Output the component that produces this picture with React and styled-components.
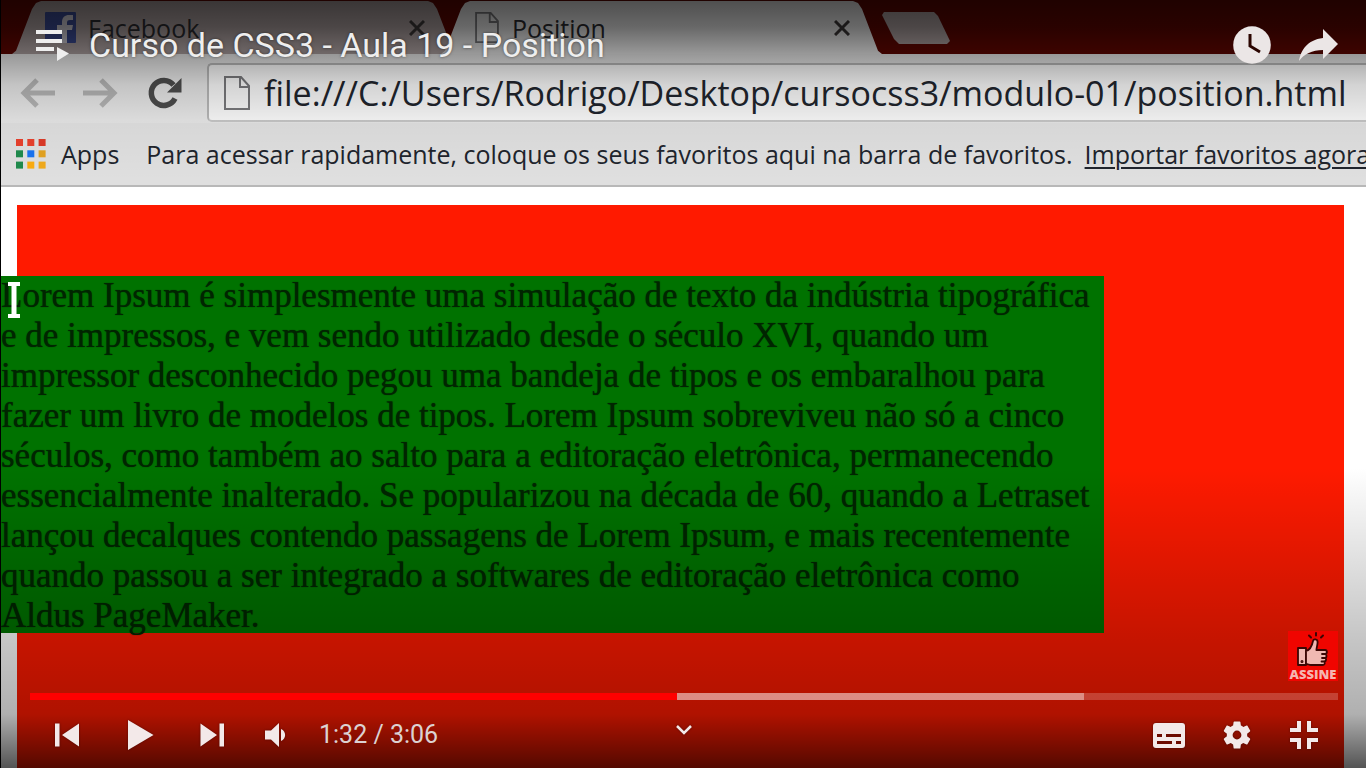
import React from "react";
import styled, { createGlobalStyle } from "styled-components";

const GlobalStyle = createGlobalStyle`
  *, *::before, *::after { box-sizing: border-box; }
  body { margin: 0; background: #000; overflow: hidden; }
  button, input { font: inherit; color: inherit; margin: 0; padding: 0; border: 0; background: none; }
  button { cursor: pointer; }
  svg { display: block; flex: none; }
  p { margin: 0; }
`;

const Player = styled.main`
  position: relative;
  display: flex;
  min-height: 100vh;
  overflow: hidden;
  background: #000;
`;

/* ---------- video frame: a browser window ---------- */

const Frame = styled.section`
  display: flex;
  flex-direction: column;
  flex: 1;
  min-width: 0;
  margin-left: 1px;
  background: #fff;
  font-family: "Open Sans", "Noto Sans", sans-serif;
  color: #20242c;
`;

const TabStrip = styled.div`
  display: flex;
  height: 54px;
  padding: 1px 0 0 11px;
  background: #5c0500;
`;

const Tab = styled.div`
  display: flex;
  align-items: center;
  width: ${(p) => p.$width}px;
  height: 53px;
  margin-right: ${(p) => (p.$active ? 0 : -16)}px;
  padding: 0 32px 0 33px;
  gap: 12px;
  background: ${(p) => (p.$active ? "#e6e6e6" : "#a89c9c")};
  color: #2a2a2e;
  font-size: 25px;
  clip-path: polygon(0 100%, 4px 94%, 20px 8px, 24px 2px, 29px 0, calc(100% - 29px) 0, calc(100% - 24px) 2px, calc(100% - 20px) 8px, calc(100% - 4px) 94%, 100% 100%);
`;

const TabTitle = styled.span`
  flex: 1;
  line-height: 32px;
`;

const NewTab = styled.button`
  width: 68px;
  height: 32px;
  margin-top: 11px;
  background: #a89c9c;
  clip-path: polygon(0 3px, 2px 0, 52px 0, 56px 4px, 68px 29px, 65px 100%, 17px 100%, 12px 27px);
`;

const Toolbar = styled.div`
  display: flex;
  align-items: flex-end;
  height: 69px;
  padding: 0 0 1px 19px;
  background: #e4e4e4;
`;

const NavButtons = styled.div`
  display: flex;
  align-items: center;
  gap: 28px;
  height: 58px;
  width: 187px;
`;

const PlainButton = styled.button`
  display: flex;
  align-items: center;
`;

const AddressBar = styled.label`
  display: flex;
  align-items: center;
  flex: 1;
  gap: 14px;
  height: 59px;
  padding-left: 15px;
  border: 2px solid #b4b4b4;
  border-right: 0;
  border-bottom-color: #c4c4c4;
  border-radius: 5px 0 0 5px;
  background: #f6f6f6;
`;

const AddressInput = styled.input`
  flex: 1;
  min-width: 0;
  height: 48px;
  font-size: 34px;
  outline: 0;
`;

const Bookmarks = styled.div`
  display: flex;
  align-items: center;
  height: 64px;
  padding-left: 15px;
  border-bottom: 2px solid #b8b8b8;
  background: #dfdfdf;
  font-size: 25px;
  white-space: nowrap;
`;

const AppsButton = styled.button`
  display: flex;
  align-items: center;
  gap: 15px;
  margin-right: 27px;
`;

const BookmarkLink = styled.a`
  margin-left: 12px;
  color: inherit;
  text-underline-offset: 3px;
  text-decoration-thickness: 2px;
`;

const Document = styled.div`
  display: flex;
  flex: 1;
  padding: 18px 22px 0 16px;
  background: #fff;
`;

const RedBox = styled.div`
  flex: 1;
  min-width: 0;
  padding-top: 71px;
  background: #ff1a00;
`;

const GreenBox = styled.div`
  display: flow-root;
  position: relative;
  width: 83.1%;
  margin-left: -16px;
  background: #007200;
`;

const Lorem = styled.p`
  margin-bottom: -3px;
  color: #002500;
  font-family: "Liberation Serif", "Times New Roman", serif;
  font-size: 35px;
  line-height: 40px;
  text-shadow: 0 0 1px #002500;
`;

const Line = styled.span`
  display: block;
  white-space: nowrap;
`;

const IBeam = styled.svg`
  position: absolute;
  top: 4px;
  left: 6px;
`;

/* ---------- player chrome ---------- */

const Overlay = styled.div`
  position: absolute;
  inset: 0;
  display: flex;
  flex-direction: column;
  justify-content: space-between;
  color: #f3e9e9;
  font-family: Roboto, sans-serif;
  background:
    linear-gradient(to bottom, rgba(0,0,0,.66) 0, rgba(0,0,0,.55) 27px, rgba(0,0,0,.32) 56px, rgba(0,0,0,.14) 85px, rgba(0,0,0,.04) 120px, transparent 180px),
    linear-gradient(to top, rgba(0,0,0,.67) 0, rgba(0,0,0,.31) 54px, rgba(0,0,0,.22) 134px, transparent 300px);
`;

const TopBar = styled.header`
  display: flex;
  align-items: center;
  height: 90px;
  padding: 0 28px 0 36px;
  gap: 20px;
  color: #eee;
`;

const Title = styled.h1`
  flex: 1;
  margin: 0;
  font-size: 34px;
  font-weight: 400;
  line-height: 40px;
  text-shadow: 0 0 3px rgba(0, 0, 0, 0.5);
`;

const TopActions = styled.div`
  display: flex;
  align-items: center;
  gap: 28px;
`;

const Bottom = styled.footer`
  display: flex;
  flex-direction: column;
  padding: 0 28px 0 30px;
`;

const Watermark = styled.button`
  display: flex;
  flex-direction: column;
  align-items: center;
  align-self: flex-end;
  width: 50px;
  height: 50px;
  margin-bottom: 12px;
  background: #f00500;
  color: #f5b5b0;
  font-family: "Open Sans", sans-serif;
  font-size: 13px;
  font-weight: 800;
  line-height: 14px;
`;

const Progress = styled.input.attrs({ type: "range" })`
  appearance: none;
  display: block;
  width: 100%;
  height: 7px;
  background: linear-gradient(
    to right,
    #ff0000 var(--played),
    rgba(255, 255, 255, 0.52) var(--played) var(--loaded),
    rgba(255, 255, 255, 0.2) var(--loaded)
  );
  &::-webkit-slider-thumb { appearance: none; width: 0; height: 7px; }
`;

const Controls = styled.div`
  display: grid;
  grid-template-columns: 1fr auto 1fr;
  align-items: center;
  height: 68px;
  padding-top: 2px;
`;

const Group = styled.div`
  display: flex;
  align-items: center;
  justify-content: ${(p) => (p.$end ? "flex-end" : "flex-start")};
`;

const ControlButton = styled.button`
  display: flex;
  align-items: center;
  justify-content: center;
  width: ${(p) => p.$width}px;
  height: 64px;
  filter: drop-shadow(0 0 1px rgba(0, 0, 0, 0.4));
`;

const MoreButton = styled(ControlButton)`
  padding-bottom: 10px;
`;

const Time = styled.span`
  margin-left: 13px;
  color: #dcd2d2;
  font-size: 25px;
  line-height: 32px;
`;

const PageIcon = ({ width, height }) => (
  <svg width={width} height={height} viewBox="0 0 26 34" fill="none" stroke="#77777a" strokeWidth="2">
    <path d="M1 1h16l8 9v23H1zM16 1v10h9" />
  </svg>
);

const CloseIcon = () => (
  <svg width="16" height="16" viewBox="0 0 16 16" stroke="#3c3838" strokeWidth="3">
    <path d="M1 1l14 14M15 1L1 15" />
  </svg>
);

const FacebookIcon = () => (
  <svg width="31" height="31" viewBox="0 0 31 31">
    <rect width="31" height="31" rx="1" fill="#39488f" />
    <path d="M17 31V18h-5v-5h5V10c0-4.600 3-7 7-7h4v5h-3c-2 0-3 .8-3 2.600V13h6l-1 5h-5v13z" fill="#c9c6cf" />
  </svg>
);

const ArrowIcon = ({ forward }) => (
  <svg width="35" height="30" viewBox="0 0 35 30" fill="none" stroke="#b2b2b2" strokeWidth="5">
    <path d={forward ? "M0 15h30M18 2l13 13-13 13" : "M35 15H5M17 2L4 15l13 13"} />
  </svg>
);

const ReloadIcon = () => (
  <svg width="38" height="34" viewBox="0 0 36 34">
    <path d="M28 22.500a12.500 12.500 0 1 1-1.500-13.500" fill="none" stroke="#4b4b4b" strokeWidth="5.500" />
    <path d="M34.500 2v14.500H20z" fill="#4b4b4b" />
  </svg>
);

const appColors = ["#e8402c", "#e8402c", "#dc3a28", "#1f8a4c", "#1a73f0", "#e3a322", "#1f8a4c", "#fbac10", "#f0aa1c"];
const AppsIcon = () => (
  <svg width="30" height="30" viewBox="0 0 30 30">
    {appColors.map((c, i) => (
      <rect key={i} x={(i % 3) * 11.300} y={Math.floor(i / 3) * 11.300} width="7" height="7" fill={c} />
    ))}
  </svg>
);

const ThumbIcon = () => (
  <svg width="34" height="36" viewBox="0 0 34 36" fill="#f0b8b2" stroke="#3a0604" strokeWidth="1.800" strokeLinejoin="round" strokeLinecap="round">
    <path d="M2 17h8v17H2z" />
    <path d="M10 20c4-1 6-5 7-10 .5-2.500 4.600-2 4.600 1 0 3-1 5-1.200 8H29c2.500 0 2.500 4 0 4 2 0 2 4 0 4 1.500 0 1.500 3.500-.5 3.500 1 1.500 0 3.500-2 3.500H15c-2 0-3-1-5-1z" />
    <path d="M26 23h3M26 27h3M25.500 30.500h3" />
    <path d="M20 2v2.500M13 4.500l2 2M27 4.500l-2 2" strokeWidth="2" />
    <circle cx="6" cy="30.500" r=".6" />
  </svg>
);

const lines = [
  "Lorem Ipsum é simplesmente uma simulação de texto da indústria tipográfica",
  "e de impressos, e vem sendo utilizado desde o século XVI, quando um",
  "impressor desconhecido pegou uma bandeja de tipos e os embaralhou para",
  "fazer um livro de modelos de tipos. Lorem Ipsum sobreviveu não só a cinco",
  "séculos, como também ao salto para a editoração eletrônica, permanecendo",
  "essencialmente inalterado. Se popularizou na década de 60, quando a Letraset",
  "lançou decalques contendo passagens de Lorem Ipsum, e mais recentemente",
  "quando passou a ser integrado a softwares de editoração eletrônica como",
  "Aldus PageMaker.",
];

const played = 49.5;
const loaded = 80.6;

export default function App() {
  return (
    <Player>
      <GlobalStyle />
      <Frame>
        <TabStrip>
          <Tab $width={445}>
            <FacebookIcon />
            <TabTitle>Facebook</TabTitle>
            <PlainButton aria-label="Fechar Facebook"><CloseIcon /></PlainButton>
          </Tab>
          <Tab $active $width={441}>
            <PageIcon width={26} height={31} />
            <TabTitle>Position</TabTitle>
            <PlainButton aria-label="Fechar Position"><CloseIcon /></PlainButton>
          </Tab>
          <NewTab aria-label="Nova guia" />
        </TabStrip>
        <Toolbar>
          <NavButtons>
            <PlainButton aria-label="Voltar"><ArrowIcon /></PlainButton>
            <PlainButton aria-label="Avançar"><ArrowIcon forward /></PlainButton>
            <PlainButton aria-label="Recarregar"><ReloadIcon /></PlainButton>
          </NavButtons>
          <AddressBar>
            <PageIcon width={26} height={34} />
            <AddressInput
              type="text"
              aria-label="Endereço"
              readOnly
              value="file:///C:/Users/Rodrigo/Desktop/cursocss3/modulo-01/position.html"
            />
          </AddressBar>
        </Toolbar>
        <Bookmarks>
          <AppsButton><AppsIcon />Apps</AppsButton>
          <span>Para acessar rapidamente, coloque os seus favoritos aqui na barra de favoritos.</span>
          <BookmarkLink href="#importar">Importar favoritos agora</BookmarkLink>
        </Bookmarks>
        <Document>
          <RedBox>
            <GreenBox>
              <Lorem>
                {lines.map((l) => <Line key={l}>{l}</Line>)}
              </Lorem>
              <IBeam width="14" height="40" viewBox="0 0 14 40">
                <path d="M1 2h12v4H9.500v28H13v4H1v-4h3.500V6H1z" fill="#fff" />
              </IBeam>
            </GreenBox>
          </RedBox>
        </Document>
      </Frame>

      <Overlay>
        <TopBar>
          <PlainButton aria-label="Playlist">
            <svg width="33" height="34" viewBox="0 0 33 34" fill="currentColor">
              <path d="M0 2h26v4H0zM0 11h26v4H0zM0 19h18v4H0zM21 19l12 6.500L21 33z" />
            </svg>
          </PlainButton>
          <Title>Curso de CSS3 - Aula 19 - Position</Title>
          <TopActions>
            <PlainButton aria-label="Assistir mais tarde">
              <svg width="38" height="38" viewBox="0 0 38 38">
                <circle cx="19" cy="19" r="18.800" fill="#ebe6e6" />
                <path d="M17 8v12l10 6" fill="none" stroke="#2b0500" strokeWidth="3" />
              </svg>
            </PlainButton>
            <PlainButton aria-label="Compartilhar">
              <svg width="39" height="34" viewBox="0 0 39 34" fill="#ebe6e6">
                <path d="M24 1l15 15-15 15v-9C13 22 5 26 0 33 2 22 8 12 24 10z" />
              </svg>
            </PlainButton>
          </TopActions>
        </TopBar>

        <Bottom>
          <Watermark>
            <ThumbIcon />
            ASSINE
          </Watermark>
          <Progress
            aria-label="Progresso"
            min="0"
            max="186"
            defaultValue="92"
            style={{ "--played": `${played}%`, "--loaded": `${loaded}%` }}
          />
          <Controls>
            <Group>
              <ControlButton $width={73} aria-label="Anterior">
                <svg width="24" height="24" viewBox="0 0 24 24" fill="currentColor"><path d="M0 .5h4.500v23H0zM24 .5v23L7 12z" /></svg>
              </ControlButton>
              <ControlButton $width={75} aria-label="Reproduzir">
                <svg width="26" height="30" viewBox="0 0 26 30" fill="currentColor"><path d="M0 0l25.500 15L0 30z" /></svg>
              </ControlButton>
              <ControlButton $width={68} aria-label="Próximo">
                <svg width="24" height="24" viewBox="0 0 24 24" fill="currentColor"><path d="M19.500 .5H24v23h-4.500zM.5 .5v23L17 12z" /></svg>
              </ControlButton>
              <ControlButton $width={60} aria-label="Volume">
                <svg width="22" height="24" viewBox="0 0 22 24" fill="currentColor"><path d="M0 7.500h6L14 0v24l-8-7.500H0zM16 6c5.500 2 5.500 10 0 12z" /></svg>
              </ControlButton>
              <Time>1:32 / 3:06</Time>
            </Group>
            <MoreButton $width={40} aria-label="Mais vídeos">
              <svg width="16" height="10" viewBox="0 0 16 10" fill="none" stroke="currentColor" strokeWidth="2.500"><path d="M1 1l7 7 7-7" /></svg>
            </MoreButton>
            <Group $end>
              <ControlButton $width={68} aria-label="Legendas">
                <svg width="32" height="25" viewBox="0 0 32 25">
                  <rect width="32" height="25" rx="3" fill="#f3e9e9" />
                  <path d="M4 12.500h5M13 12.500h15M4 19.500h15M23 19.500h5" stroke="#6c0a00" strokeWidth="3" />
                </svg>
              </ControlButton>
              <ControlButton $width={67} aria-label="Configurações">
                <svg width="34" height="34" viewBox="0 0 24 24" fill="currentColor">
                  <path d="M19.140 12.940c.04-.3.060-.61.060-.94 0-.32-.02-.64-.07-.94l2.030-1.580c.18-.14.230-.41.120-.61l-1.920-3.320c-.12-.22-.37-.29-.59-.22l-2.390.96c-.5-.38-1.030-.7-1.620-.94L14.400 2.810c-.04-.24-.24-.41-.48-.41h-3.840c-.24 0-.43.17-.47.410L9.250 5.350C8.660 5.590 8.120 5.920 7.630 6.290L5.240 5.330c-.22-.08-.47 0-.59.220L2.740 8.870c-.12.210-.08.470.120.610l2.030 1.580c-.05.3-.09.630-.09.940s.02.640.070.940l-2.030 1.580c-.18.140-.23.410-.12.610l1.920 3.320c.12.220.370.290.590.220l2.390-.96c.5.380 1.030.7 1.620.940l.36 2.540c.05.240.240.410.480.410h3.840c.24 0 .44-.17.470-.41l.36-2.540c.59-.24 1.130-.56 1.620-.94l2.390.96c.22.080.470 0 .59-.22l1.920-3.320c.12-.22.070-.47-.12-.61l-2.010-1.580zM12 15.100a3.100 3.100 0 1 1 0-6.200 3.100 3.100 0 0 1 0 6.200z" />
                </svg>
              </ControlButton>
              <ControlButton $width={68} aria-label="Sair da tela cheia">
                <svg width="28" height="28" viewBox="0 0 28 28" fill="none" stroke="currentColor" strokeWidth="4">
                  <path d="M0 9h9V0M19 0v9h9M0 19h9v9M28 19h-9v9" />
                </svg>
              </ControlButton>
            </Group>
          </Controls>
        </Bottom>
      </Overlay>
    </Player>
  );
}
